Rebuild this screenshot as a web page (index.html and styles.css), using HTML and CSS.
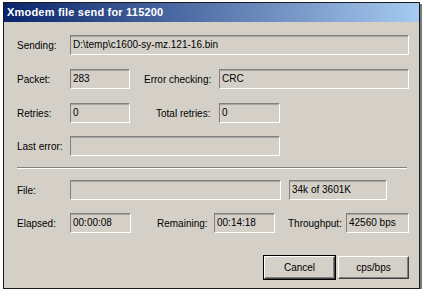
FILE: index.html
```html
<!doctype html>
<html lang="en">
<head>
  <meta charset="UTF-8" />
  <meta name="viewport" content="width=device-width, initial-scale=1" />
  <title>Xmodem file send</title>
  <link rel="stylesheet" href="styles.css">
</head>
<body>
  <div class="window">
    <div class="titlebar">Xmodem file send for 115200</div>
    <div class="content">
      <div class="row row-first">
        <span class="label">Sending:</span>
        <span class="field grow">D:\temp\c1600-sy-mz.121-16.bin</span>
      </div>
      <div class="row">
        <span class="label">Packet:</span>
        <span class="field w60">283</span>
        <span class="label label-err">Error checking:</span>
        <span class="field grow">CRC</span>
      </div>
      <div class="row">
        <span class="label">Retries:</span>
        <span class="field w60">0</span>
        <span class="label label-total">Total retries:</span>
        <span class="field w61">0</span>
      </div>
      <div class="row row-tight">
        <span class="label">Last error:</span>
        <span class="field w210"></span>
      </div>
      <div class="separator"></div>
      <div class="row row-file">
        <span class="label">File:</span>
        <span class="field w211"></span>
        <span class="field progress">34k of 3601K</span>
      </div>
      <div class="row row-tight">
        <span class="label">Elapsed:</span>
        <span class="field w61">00:00:08</span>
        <span class="label label-remain">Remaining:</span>
        <span class="field w61">00:14:18</span>
        <span class="label label-thru">Throughput:</span>
        <span class="field grow">42560 bps</span>
      </div>
      <div class="buttons">
        <button class="btn btn-default" type="button">Cancel</button>
        <button class="btn" type="button">cps/bps</button>
      </div>
    </div>
  </div>
</body>
</html>
```

FILE: styles.css
```css
body {
  margin: 0;
  padding: 2px 0 0 3px;
  background: #fff;
  font-family: "Liberation Sans", Arial, sans-serif;
  font-size: 10px;
  color: #000;
}
.window {
  width: 417px;
  height: 287px;
  box-sizing: border-box;
  border: 1px solid #1a1a1a;
  background: #d4d0c8;
  box-shadow: 2px 2px 0 #7a7a7a;
}
.titlebar {
  height: 19px;
  line-height: 19px;
  padding-left: 3px;
  background: linear-gradient(to right, #0a246a, #a6caf0);
  color: #fff;
  font-weight: bold;
  font-size: 11px;
  letter-spacing: 0.2px;
}
.content {
  padding: 0 10px 0 13px;
}
.row {
  display: flex;
  align-items: center;
  height: 20px;
  margin-top: 14px;
}
.row-first {
  margin-top: 13px;
}
.row-tight {
  margin-top: 13px;
}
.row-file {
  margin-top: 11px;
}
.label {
  width: 53px;
  flex: none;
  white-space: nowrap;
}
.label-err {
  width: 75px;
  margin-left: 14px;
}
.label-total {
  width: 63px;
  margin-left: 26px;
}
.label-remain {
  width: 57px;
  margin-left: 26px;
}
.label-thru {
  width: 58px;
  margin-left: 13px;
}
.field {
  box-sizing: border-box;
  height: 20px;
  line-height: 18px;
  padding-left: 2px;
  border: 1px solid;
  border-color: #808080 #fff #fff #808080;
  box-shadow: inset 0 1px 0 #a8a5a0;
  white-space: nowrap;
  overflow: hidden;
  flex: none;
}
.grow {
  flex: 1;
}
.w60 {
  width: 60px;
}
.w61 {
  width: 61px;
}
.w210 {
  width: 210px;
}
.w211 {
  width: 211px;
}
.progress {
  width: 98px;
  margin-left: 8px;
}
.separator {
  height: 1px;
  margin: 11px 2px 0 0;
  border-top: 1px solid #808080;
  border-bottom: 1px solid #fff;
  height: 0;
}
.buttons {
  display: flex;
  justify-content: flex-end;
  gap: 3px;
  margin-top: 23px;
}
.btn {
  width: 71px;
  height: 23px;
  padding: 0;
  font-family: "Liberation Sans", Arial, sans-serif;
  font-size: 10px;
  color: #000;
  background: #d4d0c8;
  border: 1px solid;
  border-color: #fff #404040 #404040 #fff;
  box-shadow: inset -1px -1px 0 #808080;
}
.btn-default {
  outline: 1px solid #000;
  outline-offset: 0;
  border-color: #fff #404040 #404040 #fff;
}
```
